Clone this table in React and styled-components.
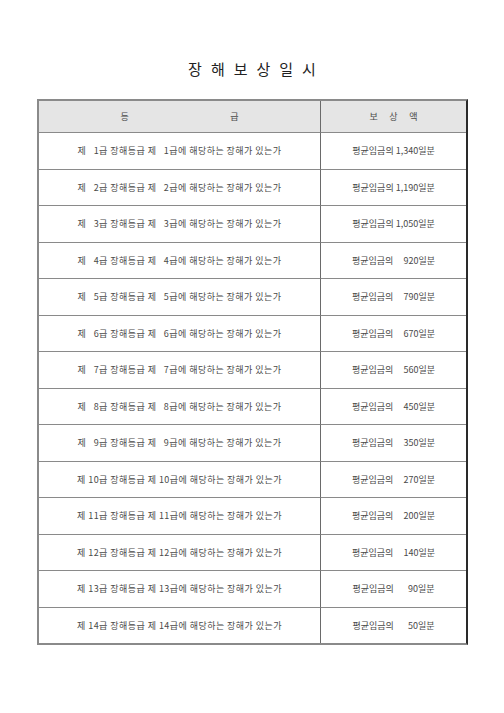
import React from 'react';
import styled, { createGlobalStyle } from 'styled-components';

const GlobalStyle = createGlobalStyle`
  html, body {
    margin: 0;
    padding: 0;
    background: #ffffff;
  }
  body {
    font-family: "Noto Sans CJK KR", "Noto Sans", sans-serif;
    color: #333;
  }
`;

const Page = styled.div`
  width: 504px;
  height: 713px;
  padding-top: 58px;
  box-sizing: border-box;
`;

const Title = styled.h1`
  margin: 0 0 19px 0;
  font-size: 15px;
  font-weight: 400;
  text-align: center;
  letter-spacing: 9px;
  padding-left: 9px;
  color: #222;
  line-height: 22px;
`;

const Table = styled.div`
  margin-left: 37px;
  width: 431px;
  box-sizing: border-box;
  border-left: 2px solid #8a8a8a;
  border-top: 2px solid #8a8a8a;
  border-right: 2px solid #2a2a2a;
  border-bottom: 2px solid #8a8a8a;
  display: grid;
  grid-template-columns: 282px 1fr;
`;

const Cell = styled.div`
  height: ${p => (p.$head ? '31px' : '35.5px')};
  display: flex;
  align-items: center;
  justify-content: center;
  white-space: pre;
  font-size: 9px;
  letter-spacing: ${p => (p.$left && !p.$head ? '0.45px' : '0')};
  color: #4a4a4a;
  background: ${p => (p.$head ? '#e5e5e5' : '#ffffff')};
  border-right: ${p => (p.$left ? '1px solid #6a6a6a' : 'none')};
  border-bottom: ${p => (p.$last ? 'none' : '1px solid #8a8a8a')};
`;

const HeadLabel = styled.span`
  display: flex;
  justify-content: space-between;
  width: ${p => p.$w}px;
`;

const amounts = ['1,340', '1,190', '1,050', '920', '790', '670', '560', '450', '350', '270', '200', '140', '90', '50'];

const pad = (s, n) => ' '.repeat(Math.max(0, n - s.length)) + s;

export default function App() {
  return (
    <Page>
      <GlobalStyle />
      <Title>장해보상일시</Title>
      <Table>
        <Cell $head $left>
          <HeadLabel $w={118}>
            <span>등</span>
            <span>급</span>
          </HeadLabel>
        </Cell>
        <Cell $head>
          <HeadLabel $w={48}>
            <span>보</span>
            <span>상</span>
            <span>액</span>
          </HeadLabel>
        </Cell>
        {amounts.map((amt, i) => {
          const n = String(i + 1);
          const g = n.length === 1 ? '  ' + n : n;
          const last = i === amounts.length - 1;
          return (
            <React.Fragment key={n}>
              <Cell $left $last={last}>
                {`제 ${g}급 장해등급 제 ${g}급에 해당하는 장해가 있는가`}
              </Cell>
              <Cell $last={last}>
                {`평균임금의 ${pad(amt, 5).replace(/ /g, '  ')}일분`}
              </Cell>
            </React.Fragment>
          );
        })}
      </Table>
    </Page>
  );
}
